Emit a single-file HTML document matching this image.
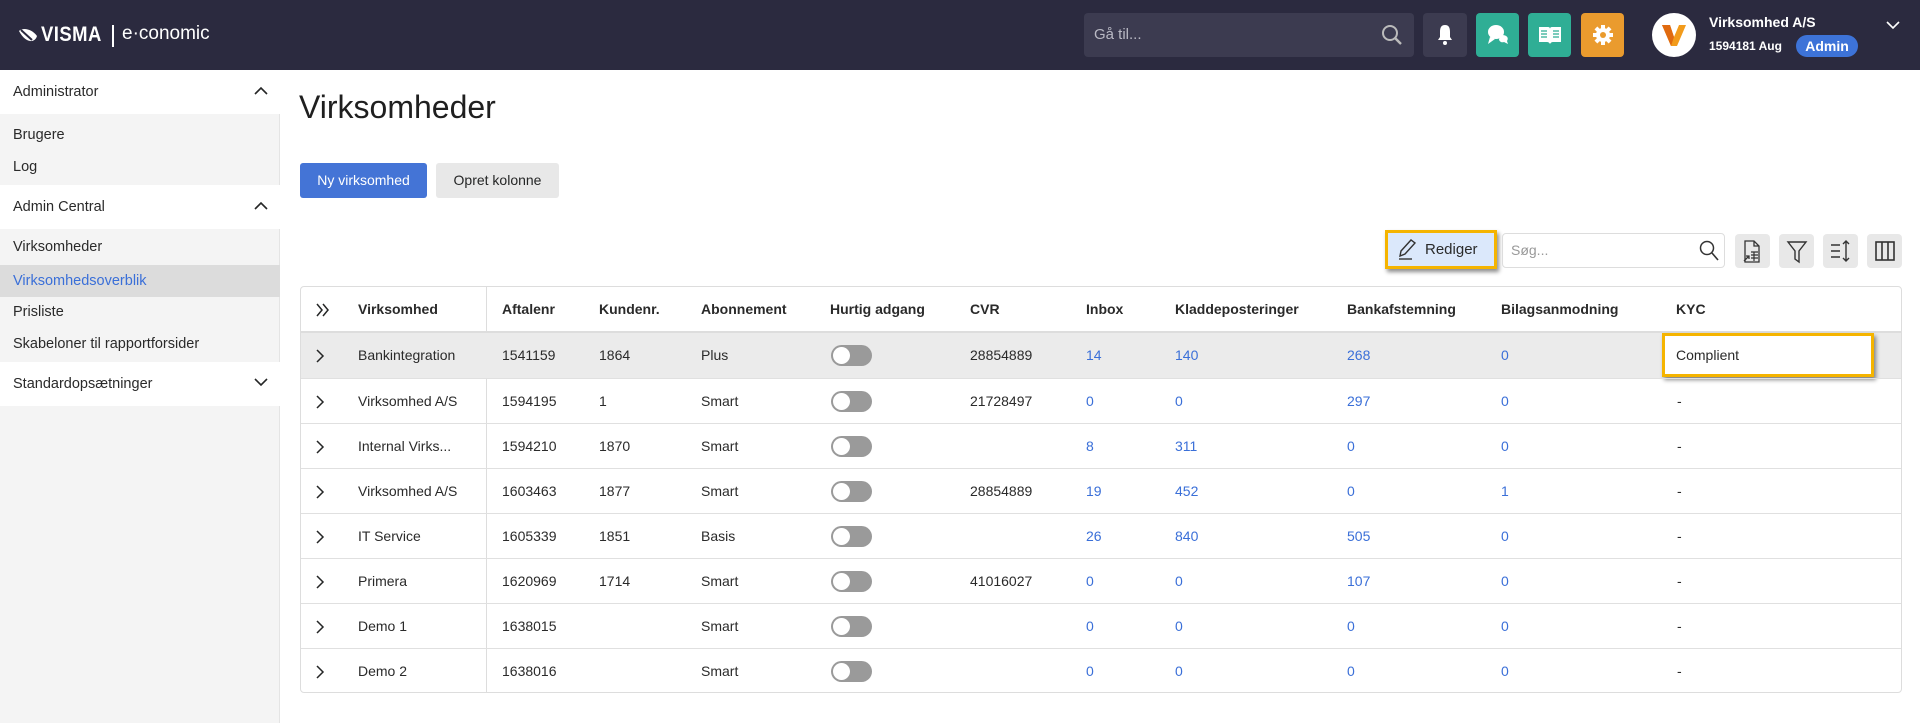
<!DOCTYPE html>
<html><head><meta charset="utf-8"><style>
*{box-sizing:border-box;margin:0;padding:0}
body{width:1920px;height:723px;overflow:hidden;font-family:"Liberation Sans",Arial,sans-serif;font-size:14px;color:#2a2a2a;background:#fff;position:relative}
.hdr{position:absolute;left:0;top:0;width:1920px;height:70px;background:#2b2a3f}
.abs{position:absolute}
.side{position:absolute;left:0;top:70px;width:280px;height:653px;background:#f4f4f4;border-right:1px solid #e4e4e4}
.sh{position:absolute;left:0;width:280px;height:44px;background:#fff;padding-left:13px;line-height:44px;font-size:14.5px}
.si{position:absolute;left:0;width:280px;height:32px;line-height:32px;padding-left:13px;font-size:14.5px}
.chev{position:absolute;right:12px;top:16px}
.btn{position:absolute;height:35px;line-height:35px;border-radius:3px;text-align:center;font-size:14px}
.ib{position:absolute;top:234px;width:35px;height:34px;background:#e8e8e8;border-radius:4px}
.tbl{position:absolute;left:300px;top:286px;width:1602px;height:407px;border:1px solid #ddd;border-radius:4px;overflow:hidden}
.row{position:absolute;left:0;width:1600px;height:45px;border-top:1px solid #e0e0e0}
.c{position:absolute;top:0;line-height:44px;white-space:nowrap}
.hc{font-weight:bold}
.lk{color:#3a6fd8}
.tg{position:absolute;left:530px;top:12px;width:41px;height:21px;border-radius:11px;background:#9a9a9a}
.tg:after{content:"";position:absolute;left:2px;top:2px;width:17px;height:17px;border-radius:50%;background:#fff}
.exp{position:absolute;left:14px;top:16px}
</style></head><body>
<div class="hdr">
 <svg class="abs" style="left:18px;top:27px" width="20" height="17" viewBox="0 0 20 17"><path d="M1 4 C5 0 14 2 19 9 C17 16 8 17 1 4Z" fill="#fff"/><path d="M3 3 L14 13" stroke="#2b2a3f" stroke-width="2"/></svg>
 <div class="abs" style="left:41px;top:23px;color:#fff;font-weight:bold;font-size:21px;letter-spacing:0.5px;transform:scaleX(0.88);transform-origin:left">VISMA</div>
 <div class="abs" style="left:112px;top:25px;width:2px;height:22px;background:#fff"></div>
 <div class="abs" style="left:122px;top:23px;color:#fff;font-size:19px">e·conomic</div>
 <div class="abs" style="left:1084px;top:13px;width:330px;height:44px;background:#3c3b50;border-radius:4px"></div>
 <div class="abs" style="left:1094px;top:26px;color:#b9b9c4;font-size:15px">Gå til...</div>
 <svg class="abs" style="left:1380px;top:23px" width="24" height="24" viewBox="0 0 24 24"><circle cx="10" cy="10" r="7" fill="none" stroke="#bbb" stroke-width="2"/><path d="M15 15L21 21" stroke="#bbb" stroke-width="2.4"/></svg>
 <div class="abs" style="left:1423px;top:13px;width:44px;height:44px;background:#3c3b50;border-radius:4px"></div>
 <svg class="abs" style="left:1434px;top:23px" width="22" height="24" viewBox="0 0 22 24"><path d="M11 2C7 2 6 5 6 9V14L4 17H18L16 14V9C16 5 15 2 11 2Z" fill="#fff"/><circle cx="11" cy="20" r="2" fill="#fff"/></svg>
 <div class="abs" style="left:1476px;top:13px;width:43px;height:44px;background:#2fae95;border-radius:4px"></div>
 <svg class="abs" style="left:1485px;top:23px" width="26" height="24" viewBox="0 0 26 24"><ellipse cx="11" cy="9" rx="8" ry="7" fill="#fff"/><path d="M5 14L3 21L10 16Z" fill="#fff"/><path d="M17 12C22 12 24 15 22 18L23 21L19 19C16 20 14 18 14 16" fill="#fff"/></svg>
 <div class="abs" style="left:1528px;top:13px;width:43px;height:44px;background:#2fae95;border-radius:4px"></div>
 <svg class="abs" style="left:1538px;top:24px" width="24" height="22" viewBox="0 0 24 22"><path d="M1 3H10Q12 3 12 5V20Q11 18 9 18H1Z M23 3H14Q12 3 12 5V20Q13 18 15 18H23Z" fill="#fff"/><path d="M3 7H9M3 10H9M3 13H9M15 7H21M15 10H21M15 13H21" stroke="#2fae95" stroke-width="1.3"/></svg>
 <div class="abs" style="left:1581px;top:13px;width:43px;height:44px;background:#ea9b2e;border-radius:4px"></div>
 <svg class="abs" style="left:1591px;top:23px" width="24" height="24" viewBox="0 0 24 24"><g fill="#fff"><circle cx="12" cy="12" r="7"/><rect x="10" y="2" width="4" height="20"/><rect x="2" y="10" width="20" height="4"/><rect x="10" y="2" width="4" height="20" transform="rotate(45 12 12)"/><rect x="10" y="2" width="4" height="20" transform="rotate(-45 12 12)"/></g><circle cx="12" cy="12" r="3" fill="#ea9b2e"/></svg>
 <div class="abs" style="left:1652px;top:13px;width:44px;height:44px;border-radius:50%;background:#fff"></div>
 <svg class="abs" style="left:1660px;top:22px" width="28" height="26" viewBox="0 0 28 26"><path d="M2 3L10 3L14 15L19 3L26 3L17 24L11 24Z" fill="#f29b1b"/><path d="M2 3L10 3L14 15L11 24Z" fill="#e06a10"/></svg>
 <div class="abs" style="left:1709px;top:14px;color:#fff;font-weight:bold;font-size:14px">Virksomhed A/S</div>
 <div class="abs" style="left:1709px;top:39px;color:#fff;font-weight:bold;font-size:12px">1594181 Aug</div>
 <div class="abs" style="left:1796px;top:35px;width:62px;height:22px;border-radius:11px;background:#3d73d8;color:#fff;font-weight:bold;font-size:14px;text-align:center;line-height:22px">Admin</div>
 <svg class="abs" style="left:1886px;top:20px" width="14" height="10" viewBox="0 0 14 10"><path d="M1 2L7 8L13 2" fill="none" stroke="#fff" stroke-width="1.6"/></svg>
</div>

<div class="side">
 <div class="sh" style="top:0">Administrator<svg class="chev" width="14" height="9" viewBox="0 0 14 9"><path d="M1 8L7 2L13 8" fill="none" stroke="#252626" stroke-width="1.6"/></svg></div>
 <div class="si" style="top:49px">Brugere</div>
 <div class="si" style="top:81px">Log</div>
 <div class="sh" style="top:115px">Admin Central<svg class="chev" width="14" height="9" viewBox="0 0 14 9"><path d="M1 8L7 2L13 8" fill="none" stroke="#252626" stroke-width="1.6"/></svg></div>
 <div class="si" style="top:161px">Virksomheder</div>
 <div class="si" style="top:195px;background:#dcdcdc;color:#3a6fd8">Virksomhedsoverblik</div>
 <div class="si" style="top:226px">Prisliste</div>
 <div class="si" style="top:258px">Skabeloner til rapportforsider</div>
 <div class="sh" style="top:292px">Standardopsætninger<svg class="chev" width="14" height="9" viewBox="0 0 14 9"><path d="M1 1L7 7L13 1" fill="none" stroke="#252626" stroke-width="1.6"/></svg></div>
</div>

<div class="abs" style="left:299px;top:89px;font-size:32px;color:#1f1f1f">Virksomheder</div>
<div class="btn" style="left:300px;top:163px;width:127px;background:#4474d6;color:#fff">Ny virksomhed</div>
<div class="btn" style="left:436px;top:163px;width:123px;background:#e8e8e8;color:#252626">Opret kolonne</div>

<div class="abs" style="left:1385px;top:230px;width:112px;height:39px;border:3px solid #f5b400;background:#dbe8fb;box-shadow:2px 3px 4px rgba(0,0,0,.45)"></div>
<svg class="abs" style="left:1396px;top:238px" width="22" height="24" viewBox="0 0 22 24"><path d="M4 18L5 13L15 2L19 5L9 16Z" fill="none" stroke="#333" stroke-width="1.4"/><path d="M3 21H16" stroke="#333" stroke-width="1.4"/></svg>
<div class="abs" style="left:1425px;top:241px;font-size:15px">Rediger</div>
<div class="abs" style="left:1502px;top:233px;width:223px;height:35px;border:1px solid #ddd;border-radius:4px"></div>
<div class="abs" style="left:1511px;top:242px;color:#999;font-size:14px">Søg...</div>
<svg class="abs" style="left:1699px;top:240px" width="20" height="22" viewBox="0 0 20 22"><circle cx="8" cy="8" r="6.5" fill="none" stroke="#333" stroke-width="1.5"/><path d="M13 13L19 20" stroke="#333" stroke-width="1.6"/></svg>
<div class="ib" style="left:1735px"></div>
<svg class="abs" style="left:1742px;top:240px" width="22" height="24" viewBox="0 0 22 24"><path d="M3 1H12L17 6V22H3Z M12 1V6H17" fill="none" stroke="#333" stroke-width="1.3"/><path d="M9 12H16M9 15H16M9 18H16M12 12V21" stroke="#333" stroke-width="1.2"/><path d="M2 21L7 16M4 16H7V19" stroke="#333" stroke-width="1.3" fill="none"/></svg>
<div class="ib" style="left:1779px"></div>
<svg class="abs" style="left:1786px;top:240px" width="22" height="24" viewBox="0 0 22 24"><path d="M2 2H20L13 11V22L9 19V11Z" fill="none" stroke="#333" stroke-width="1.4"/></svg>
<div class="ib" style="left:1823px"></div>
<svg class="abs" style="left:1829px;top:239px" width="24" height="24" viewBox="0 0 24 24"><path d="M2 6H11M2 12H11M2 18H11" stroke="#333" stroke-width="1.6"/><path d="M17 2V22M14 5L17 2L20 5M14 19L17 22L20 19" stroke="#333" stroke-width="1.4" fill="none"/></svg>
<div class="ib" style="left:1867px"></div>
<svg class="abs" style="left:1874px;top:240px" width="22" height="22" viewBox="0 0 22 22"><rect x="2" y="2" width="18" height="18" fill="none" stroke="#333" stroke-width="1.6"/><path d="M8 2V20M14 2V20" stroke="#333" stroke-width="1.6"/></svg>

<div class="tbl">
 <div class="abs" style="left:185px;top:0;width:1px;height:407px;background:#ddd"></div>
 <div class="row" style="top:0;border-top:none;height:46px;border-bottom:2px solid #ddd">
  <svg class="exp" style="top:16px" width="16" height="14" viewBox="0 0 16 14"><path d="M2 1L7 7L2 13M8 1L13 7L8 13" fill="none" stroke="#252626" stroke-width="1.5"/></svg>
  <div class="c hc" style="left:57px;line-height:45px">Virksomhed</div>
  <div class="c hc" style="left:201px;line-height:45px">Aftalenr</div>
  <div class="c hc" style="left:298px;line-height:45px">Kundenr.</div>
  <div class="c hc" style="left:400px;line-height:45px">Abonnement</div>
  <div class="c hc" style="left:529px;line-height:45px">Hurtig adgang</div>
  <div class="c hc" style="left:669px;line-height:45px">CVR</div>
  <div class="c hc" style="left:785px;line-height:45px">Inbox</div>
  <div class="c hc" style="left:874px;line-height:45px">Kladdeposteringer</div>
  <div class="c hc" style="left:1046px;line-height:45px">Bankafstemning</div>
  <div class="c hc" style="left:1200px;line-height:45px">Bilagsanmodning</div>
  <div class="c hc" style="left:1375px;line-height:45px">KYC</div>
 </div>
</div>
<script>
var d=[["Bankintegration","1541159","1864","Plus","28854889","14","140","268","0","Complient"],
["Virksomhed A/S","1594195","1","Smart","21728497","0","0","297","0","-"],
["Internal Virks...","1594210","1870","Smart","","8","311","0","0","-"],
["Virksomhed A/S","1603463","1877","Smart","28854889","19","452","0","1","-"],
["IT Service","1605339","1851","Basis","","26","840","505","0","-"],
["Primera","1620969","1714","Smart","41016027","0","0","107","0","-"],
["Demo 1","1638015","","Smart","","0","0","0","0","-"],
["Demo 2","1638016","","Smart","","0","0","0","0","-"]];
var h="";
d.forEach(function(r,i){
 var t=46+i*45;
 h+='<div class="row" style="top:'+t+'px;'+(i==0?'background:#ebebeb;border-top:none':'')+'">'+
 '<svg class="exp" width="10" height="14" viewBox="0 0 10 14"><path d="M2 1L8 7L2 13" fill="none" stroke="#252626" stroke-width="1.5"/></svg>'+
 '<div class="c" style="left:57px">'+r[0]+'</div><div class="c" style="left:201px">'+r[1]+'</div><div class="c" style="left:298px">'+r[2]+'</div><div class="c" style="left:400px">'+r[3]+'</div><div class="tg"></div><div class="c" style="left:669px">'+r[4]+'</div><div class="c lk" style="left:785px">'+r[5]+'</div><div class="c lk" style="left:874px">'+r[6]+'</div><div class="c lk" style="left:1046px">'+r[7]+'</div><div class="c lk" style="left:1200px">'+r[8]+'</div>'+
 (i==0?'<div class="abs" style="left:1361px;top:0;width:212px;height:44px;background:#fff;border:3px solid #f5b400;box-shadow:2px 3px 4px rgba(0,0,0,.45);padding-left:11px;line-height:38px">Complient</div>':'<div class="c" style="left:1376px">-</div>')+'</div>';
});
document.querySelector(".tbl").insertAdjacentHTML("beforeend",h);
</script>
</body></html>
